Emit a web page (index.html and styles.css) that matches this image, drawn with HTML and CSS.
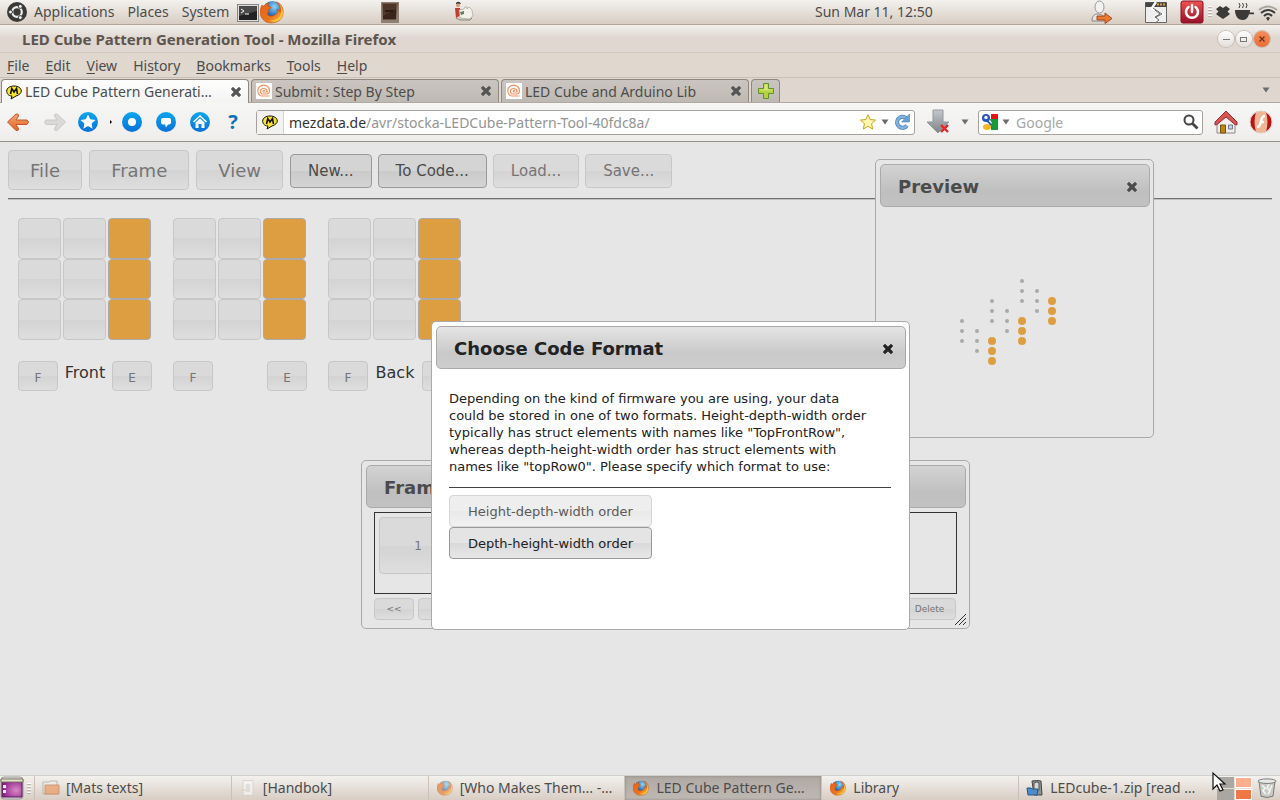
FILE: index.html
```html
<!DOCTYPE html>
<html lang="en">
<head>
<meta charset="utf-8">
<title>LED Cube Pattern Generation Tool - Mozilla Firefox</title>
<link rel="stylesheet" href="styles.css">
</head>
<body>
<svg class="defs" aria-hidden="true">
  <defs>
    <linearGradient id="blue" x1="0" y1="0" x2="0" y2="1"><stop offset="0" stop-color="#0aa6f0"/><stop offset="1" stop-color="#0a72d8"/></linearGradient>
    <linearGradient id="orange" x1="0" y1="0" x2="0" y2="1"><stop offset="0" stop-color="#f5a878"/><stop offset="1" stop-color="#e2601c"/></linearGradient>
    <linearGradient id="grey" x1="0" y1="0" x2="0" y2="1"><stop offset="0" stop-color="#c4c8cc"/><stop offset="1" stop-color="#7d8388"/></linearGradient>
    <linearGradient id="red" x1="0" y1="0" x2="0" y2="1"><stop offset="0" stop-color="#ee5350"/><stop offset="1" stop-color="#96102a"/></linearGradient>
    <radialGradient id="sphere" cx=".6" cy=".3" r=".7"><stop offset="0" stop-color="#8fd4f5"/><stop offset=".6" stop-color="#2f79c2"/><stop offset="1" stop-color="#173d80"/></radialGradient>
    <linearGradient id="flame" x1="0" y1="0" x2="1" y2="1"><stop offset="0" stop-color="#e8611a"/><stop offset=".6" stop-color="#e8761c"/><stop offset="1" stop-color="#ffcf3d"/></linearGradient>
    <radialGradient id="purple" cx=".7" cy=".6" r=".7"><stop offset="0" stop-color="#d98ac6"/><stop offset="1" stop-color="#8c1d8c"/></radialGradient>
    <symbol id="firefox" viewBox="0 0 24 24">
      <circle cx="12.500" cy="10.500" r="9.500" fill="url(#sphere)"/>
      <path d="M2 5c1 1 1 1 2 1 1-2 3-3 5-3-1 1-1 2-1 3l3 1c0 2-2 2-3 3 0 1 1 1 1 2-2 0-2 2-1 3 2 2 6 1 8-1 1-1 2-2 1-5 2 1 3 2 3 3 1-4-1-8-4-10 5 1 8 6 7 12-1 6-6 9-12 9C5 23 0 18 0 12c0-3 1-5 2-7z" fill="url(#flame)" stroke="#b8430d" stroke-width=".5"/>
      <path d="M19 4c3 4 3 8 1 12-2 3-6 5-10 4 5 4 12 0 13-6 0-4-1-8-4-10z" fill="#ffcc3a" opacity=".8"/>
    </symbol>
    <symbol id="bubble-m" viewBox="0 0 16 16">
      <path d="M8 2c4 0 7.300 2 7.300 5 0 2-2 4-5.300 5l-5 3 1-3C2 12 .7 9 .7 7c0-3 3.300-5 7.300-5z" fill="#fbe52c" stroke="#111" stroke-width="1"/>
      <path d="M4.500 10l1.300-5.500L8 8l2.500-3.500L11.500 10" fill="none" stroke="#111" stroke-width="1.600"/>
    </symbol>
    <symbol id="spiral" viewBox="0 0 16 16">
      <rect width="16" height="16" fill="#fff"/>
      <path d="M13.500 13H5.500C1 12 .5 5.500 4.500 3c4-2.500 9 .5 9 4.500 0 2-1 3.500-3 3.500H6C3.500 9.500 4 5.500 7.500 5.500c2.500 0 3.800 1.500 3.500 3.500H7.500c-.8-1 .2-2 1.500-1.500" fill="none" stroke="#f5915f" stroke-width="1.200"/>
    </symbol>
    <symbol id="cross" viewBox="0 0 12 12"><path d="M1.500 2.500l1-1h1L6 4l2.500-2.500h1l1 1v1L8 6l2.500 2.500v1l-1 1h-1L6 8l-2.500 2.500h-1l-1-1v-1L4 6 1.500 3.500z" fill="currentColor" stroke="currentColor" stroke-width=".6"/></symbol>
    <symbol id="caret" viewBox="0 0 8 6"><path d="M.5.500h7L4 5.500z" fill="currentColor"/></symbol>
    <symbol id="led-plane" viewBox="0 0 48 58" overflow="visible">
      <g fill="#aaa"><circle cx="7" cy="7" r="2"/><circle cx="7" cy="17" r="2"/><circle cx="7" cy="27" r="2"/><circle cx="22" cy="17" r="2"/><circle cx="22" cy="27" r="2"/><circle cx="22" cy="37" r="2"/></g>
      <g fill="#dd9e41"><circle cx="37" cy="27" r="4"/><circle cx="37" cy="37" r="4"/><circle cx="37" cy="47" r="4"/></g>
    </symbol>
  </defs>
</svg>
<div class="desktop">
  <header class="panel">
    <nav class="panel-menu">
      <svg class="i20" viewBox="0 0 20 20"><circle cx="10" cy="10" r="10" fill="#3a3936"/><circle cx="10" cy="10" r="4.800" fill="none" stroke="#eee" stroke-width="2.200"/><g fill="#eee" stroke="#3a3936"><circle cx="3.500" cy="10" r="2"/><circle cx="13.300" cy="4.400" r="2"/><circle cx="13.300" cy="15.600" r="2"/></g></svg>
      <button>Applications</button><button>Places</button><button>System</button>
    </nav>
    <div class="launchers">
      <svg class="i22" viewBox="0 0 22 22"><rect x=".5" y="3.500" width="21" height="17" fill="#ddd" stroke="#888"/><rect x="2" y="5" width="18" height="14" fill="#222"/><path d="M2 5h18v5L2 15z" fill="#4a4a4a"/><path d="M4 8l3 2-3 2M8 13h4" stroke="#fff" fill="none"/></svg>
      <svg class="i24"><use href="#firefox"/></svg>
    </div>
    <svg class="i20 drawer" viewBox="0 0 20 20"><path d="M1 0h18v21H1z" fill="#8f8074"/><path d="M2 1h16l-2 17H3z" fill="#6d5343"/><path d="M3 2h13v15H3z" fill="#3a241b"/><path d="M3 2h13v5L3 14z" fill="#4e352a"/><path d="M5 9h8" stroke="#2a1811" stroke-width="2"/></svg>
    <svg class="i20 worker" viewBox="0 0 20 20"><circle cx="4" cy="3" r="2.200" fill="#d9a178"/><path d="M2 2c0-3 4-3 5 0l-3-.5z" fill="#333"/><path d="M1 6h5l1 7-5 3z" fill="#c43b30"/><path d="M5 8l5-1 1-2h2v2l2-2 3 3 1 6-4 3-9-1z" fill="#f4f1ea" stroke="#998" stroke-width=".6"/><path d="M6 10l4-1v3l-3 1z" fill="#5c835a"/><path d="M2 16l4 2h10l2-2" fill="none" stroke="#887"/></svg>
    <span class="clock">Sun Mar 11, 12:50</span>
    <div class="tray">
      <svg class="i24 user" viewBox="0 0 24 24"><path d="M2 21c0-5 2-7 6-7s6 2 6 7z" fill="#e4e4e2" stroke="#888"/><ellipse cx="9.500" cy="7" rx="4.500" ry="6" fill="#f2f2f0" stroke="#999"/><path d="M7 16h8v-3l7 5.500-7 5V20H7z" fill="#e87930" stroke="#a8481a"/></svg>
      <svg class="i24 shot" viewBox="0 0 24 24"><path d="M1.500 2.500h21v20h-21z" fill="#eee" stroke="#666"/><path d="M1.500 2.500h21V7h-21z" fill="#444"/><path d="M13 4.500h2m1 0h2m1 0h2" stroke="#d9a33a" stroke-width="2"/><path d="M12 2L8 8l10 6-6 2 1 6" stroke="#fff" stroke-width="2.500" fill="none"/><path d="M9 8l9 6-6 3 1 1m-2-8l5 4-5 3 4 3-4 3" stroke="#666" fill="none"/></svg>
      <svg class="i24 power" viewBox="0 0 24 24"><rect x="1" y="1" width="22" height="22" rx="2" fill="url(#red)" stroke="#8b1020"/><path d="M8.500 7a6 6 0 1 0 7 0M12 5v7" fill="none" stroke="#fff" stroke-width="2.500" stroke-linecap="round"/></svg>
      <i class="grip"></i>
      <svg class="i14 dropbox" viewBox="0 0 14 14"><path d="M4 1l3 2 3-2 4 3-2.500 2.500L14 9l-2.500 2L7 14l-4.500-3L0 9l2.500-2.500L0 4z" fill="#3b3a37"/></svg>
      <svg class="i20" viewBox="0 0 20 20"><path d="M1 8h15c0 1 0 2-.3 2.500H20v1.700h-5C14 16 12 18 8.500 18 4 18 1 14 1 8z" fill="#3b3a37"/><path d="M5 1q2 2 0 5M8.500 1q2 2 0 5M12 1q2 2 0 5" fill="none" stroke="#3b3a37"/></svg>
      <svg class="i20 wifi" viewBox="0 0 20 20"><g fill="none" stroke-width="2"><path d="M1 8q9-7 18 0" stroke="#aaa6a0"/><path d="M3 11q7-6 14 0M6 14q4-4 8 0" stroke="#3b3a37"/></g><path d="M8 16q2-2 4 0l-2 3z" fill="#3b3a37"/></svg>
    </div>
  </header>
  <div class="titlebar"><h1>LED Cube Pattern Generation Tool - Mozilla Firefox</h1>
    <div class="win-buttons">
      <button aria-label="Minimize"><svg viewBox="0 0 16 16"><path d="M5 8.500h7" stroke="#777"/></svg></button>
      <button aria-label="Maximize"><svg viewBox="0 0 16 16"><rect x="4.500" y="6.500" width="6" height="4" fill="none" stroke="#777"/></svg></button>
      <button class="win-close" aria-label="Close"><svg viewBox="0 0 16 16"><path d="M5.500 5.500l5 5m0-5l-5 5" stroke="#6b3018" stroke-width="1.200"/></svg></button>
    </div>
  </div>
  <nav class="menubar"><button><u>F</u>ile</button><button><u>E</u>dit</button><button><u>V</u>iew</button><button>Hi<u>s</u>tory</button><button><u>B</u>ookmarks</button><button><u>T</u>ools</button><button><u>H</u>elp</button></nav>
  <div class="tabs">
    <div class="tab active"><svg class="i16"><use href="#bubble-m"/></svg><span>LED Cube Pattern Generati…</span><button aria-label="Close tab"><svg><use href="#cross"/></svg></button></div>
    <div class="tab"><svg class="i16"><use href="#spiral"/></svg><span>Submit : Step By Step</span><button aria-label="Close tab"><svg><use href="#cross"/></svg></button></div>
    <div class="tab"><svg class="i16"><use href="#spiral"/></svg><span>LED Cube and Arduino Lib</span><button aria-label="Close tab"><svg><use href="#cross"/></svg></button></div>
    <button class="new-tab" aria-label="New tab"><svg class="i16" viewBox="0 0 16 16"><path d="M5.500.500h5v5h5v5h-5v5h-5v-5h-5v-5h5z" fill="#b5d340" stroke="#62902e"/><path d="M6.500 1.500h3v5h5v1h-13v-1h5z" fill="#d8e87c"/></svg></button>
    <button class="tab-list" aria-label="List all tabs"><svg class="caret"><use href="#caret"/></svg></button>
  </div>
  <div class="navbar">
    <div class="nav-icons">
      <button aria-label="Back"><svg class="i24" viewBox="0 0 24 24"><path d="M1.500 12L10 4q3-.5 2.500 2L10 10h11q3 2 0 4.500H10l2.500 4q.5 2.500-2.500 2z" fill="url(#orange)" stroke="#c4562a"/></svg></button>
      <button aria-label="Forward"><svg class="i24" viewBox="0 0 24 24"><path d="M22.500 12L14 4q-3-.5-2.500 2l2.500 4H3q-3 2 0 4.500h11l-2.500 4q-.5 2.500 2.500 2z" fill="#dad9d7" stroke="#c9c8c6"/></svg></button>
      <button aria-label="Bookmarks"><svg class="i20" viewBox="0 0 20 20"><circle cx="10" cy="10" r="10" fill="url(#blue)"/><path d="M10 2.500l2.200 4.800 5.300.6-3.900 3.600 1 5.200L10 14.100l-4.600 2.600 1-5.200-3.900-3.600 5.300-.6z" fill="#fff"/></svg></button>
      <svg class="dot" viewBox="0 0 4 6"><path d="M1 1l2 2-2 2z"/></svg>
      <button aria-label="Record"><svg class="i20" viewBox="0 0 20 20"><circle cx="10" cy="10" r="10" fill="url(#blue)"/><circle cx="10" cy="10" r="4" fill="#fff"/></svg></button>
      <button aria-label="Comments"><svg class="i20" viewBox="0 0 20 20"><circle cx="10" cy="10" r="10" fill="url(#blue)"/><path d="M7 6h6q2 0 2 2v2.500q0 2-2 2h-1L10 15.500l-1-3H7q-2 0-2-2V8q0-2 2-2z" fill="#fff"/></svg></button>
      <button aria-label="Site home"><svg class="i20" viewBox="0 0 20 20"><circle cx="10" cy="10" r="10" fill="url(#blue)"/><path d="M3.500 10L10 4l6.500 6" fill="none" stroke="#fff" stroke-width="1.600"/><path d="M5.500 10.500L10 6.500l4.500 4V16h-3v-4h-3v4h-3z" fill="#fff"/></svg></button>
      <button class="help" aria-label="Help">?</button>
    </div>
    <div class="urlbar">
      <div class="identity"><svg class="i16"><use href="#bubble-m"/></svg></div>
      <div class="url" role="textbox" aria-label="Address"><span>mezdata.de</span>/avr/stocka-LEDCube-Pattern-Tool-40fdc8a/</div>
      <button aria-label="Bookmark this page"><svg class="i16" viewBox="0 0 16 16"><path d="M8 .7l2.200 4.800 5.300.6-3.900 3.600 1 5.300L8 12.300 3.400 15l1-5.300L.5 6.100l5.300-.6z" fill="#fff6b0" stroke="#c9a216"/></svg></button>
      <svg class="caret"><use href="#caret"/></svg>
      <button aria-label="Reload"><svg class="i16" viewBox="0 0 16 16"><path d="M13 11.500A5.500 5.500 0 1 1 12 4" fill="none" stroke="#4a7fb8" stroke-width="4"/><path d="M13 11.500A5.500 5.500 0 1 1 12 4" fill="none" stroke="#82b3e0" stroke-width="2.400"/><path d="M15.500 0v8h-8z" fill="#6d9fd2" stroke="#4a7fb8" stroke-width=".6"/></svg></button>
    </div>
    <div class="download"><svg class="i24" viewBox="0 0 24 24"><path d="M7 0h10v12h6L12 23 1 12h6z" fill="url(#grey)" stroke="#92979b"/><path d="M15 15l7 7m0-7l-7 7" stroke="#ed2224" stroke-width="2.400"/></svg><svg class="caret"><use href="#caret"/></svg></div>
    <div class="search">
      <svg class="i16" viewBox="0 0 16 16"><rect width="16" height="16" fill="#fff"/><path d="M9 0h7v5H9z" fill="#e11"/><path d="M8 5h8v11H9z" fill="#139b3c"/><path d="M5 1h4L8 6l2 3-2 2H5L1 7z" fill="#fff"/><circle cx="4" cy="4" r="4" fill="#2853c5"/><circle cx="4" cy="3.500" r="1.700" fill="#fff"/><ellipse cx="5" cy="13" rx="4" ry="3" fill="#f4b61b"/><path d="M5 7q3 2 4 4" stroke="#2853c5" stroke-width="2"/></svg>
      <svg class="caret"><use href="#caret"/></svg>
      <input type="text" placeholder="Google" aria-label="Search">
      <svg class="i16" viewBox="0 0 16 16"><circle cx="6" cy="6" r="4.500" fill="none" stroke="#454545" stroke-width="2"/><path d="M9.500 9.500l5 5" stroke="#454545" stroke-width="2.800"/></svg>
    </div>
    <button class="home" aria-label="Home"><svg class="i24" viewBox="0 0 24 24"><path d="M3 12l9-7 9 7v11H3z" fill="#f1efec" stroke="#888"/><path d="M1 12L12 1l11 11v3l-2-.5L12 7l-9 7.500L1 15z" fill="#d95452" stroke="#9c2c2f"/><path d="M6.500 15h5v8h-5z" fill="#bd8416" stroke="#7c530c"/><path d="M14.500 15h4v4h-4z" fill="#b8d3ee" stroke="#778"/></svg></button>
    <button class="flash" aria-label="Flash"><svg class="i24" viewBox="0 0 24 24"><circle cx="12" cy="12" r="11" fill="#b81212"/><path d="M7 2q5-2 10 0 3 10 0 20-5 2-10 0-3-10 0-20z" fill="#f0b594"/><path d="M16 6q-3 0-4 5-1 6-4 6M11 12h4" fill="none" stroke="#fff" stroke-width="2.400"/><circle cx="12" cy="12" r="11" fill="none" stroke="#dfd2cc"/></svg></button>
  </div>
  <main class="page">
    <div class="toolbar">
      <button class="btn big">File</button><button class="btn big">Frame</button><button class="btn big">View</button>
      <div class="actions"><button class="btn on">New...</button><button class="btn on">To Code...</button><button class="btn">Load...</button><button class="btn">Save...</button></div>
    </div>
    <div class="planes">
      <section class="plane">
        <div class="cells"><button class="btn"></button><button class="btn"></button><button class="btn lit"></button><button class="btn"></button><button class="btn"></button><button class="btn lit"></button><button class="btn"></button><button class="btn"></button><button class="btn lit"></button></div>
        <div class="plane-foot"><button class="btn">F</button><span>Front</span><button class="btn">E</button></div>
      </section>
      <section class="plane">
        <div class="cells"><button class="btn"></button><button class="btn"></button><button class="btn lit"></button><button class="btn"></button><button class="btn"></button><button class="btn lit"></button><button class="btn"></button><button class="btn"></button><button class="btn lit"></button></div>
        <div class="plane-foot"><button class="btn">F</button><button class="btn">E</button></div>
      </section>
      <section class="plane">
        <div class="cells"><button class="btn"></button><button class="btn"></button><button class="btn lit"></button><button class="btn"></button><button class="btn"></button><button class="btn lit"></button><button class="btn"></button><button class="btn"></button><button class="btn lit"></button></div>
        <div class="plane-foot"><button class="btn">F</button><span>Back</span><button class="btn"></button></div>
      </section>
    </div>
    <section class="dialog preview">
      <header><h2>Preview</h2><button aria-label="Close"><svg><use href="#cross"/></svg></button></header>
      <svg class="cube" viewBox="0 0 108 98" role="img" aria-label="Cube preview"><use href="#led-plane" x="0" y="40" width="48" height="58"/><use href="#led-plane" x="30" y="20" width="48" height="58"/><use href="#led-plane" x="60" y="0" width="48" height="58"/></svg>
    </section>
    <section class="dialog frames">
      <header><h2>Frames</h2></header>
      <div class="strip"><button class="btn">1</button></div>
      <div class="frame-foot"><button class="btn">&lt;&lt;</button><button class="btn" aria-label="Next"></button><button class="btn delete">Delete</button></div>
      <svg class="resize" viewBox="0 0 12 12"><path d="M0 11L11 0M4 11l7-7M8 11l3-3" stroke="#333" fill="none"/></svg>
    </section>
    <section class="dialog modal" role="dialog" aria-labelledby="fmt">
      <header><h2 id="fmt">Choose Code Format</h2><button aria-label="Close"><svg><use href="#cross"/></svg></button></header>
      <div class="modal-body">
        <p>Depending on the kind of firmware you are using, your data could be stored in one of two formats. Height-depth-width order typically has struct elements with names like "TopFrontRow", whereas depth-height-width order has struct elements with names like "topRow0". Please specify which format to use:</p>
        <hr>
        <button class="btn pale">Height-depth-width order</button>
        <button class="btn strong">Depth-height-width order</button>
      </div>
    </section>
  </main>
  <footer class="taskbar">
    <button class="show-desktop" aria-label="Show desktop"><svg class="i24" viewBox="0 0 24 24"><rect x="1" y="1" width="22" height="22" rx="3" fill="#ddd" stroke="#999"/><path d="M2 4h20v17H2z" fill="url(#purple)" stroke="#5b1a5b"/><path d="M1 3h22v3H1z" fill="#e6e3d4" stroke="#777355"/><path d="M3 9h3v3H3zm0 5h3v3H3z" fill="#eee"/></svg></button>
    <i class="grip"></i>
    <div class="tasks">
      <button><svg class="i16 faded" viewBox="0 0 16 16"><path d="M0 2h6l1-1h7v13H0z" fill="#eee" stroke="#999"/><path d="M2 5h14v9H2z" fill="#ec8f52" stroke="#bd6a37"/></svg><span>[Mats texts]</span></button>
      <button><svg class="i16 faded" viewBox="0 0 16 16"><path d="M3 .5h10v15H3z" fill="#fafafa" stroke="#ccc"/><path d="M6 4h4v8H6z" fill="#ddd"/><path d="M1 10h5" stroke="#dcca9a"/></svg><span>[Handbok]</span></button>
      <button><svg class="i16 faded"><use href="#firefox"/></svg><span>[Who Makes Them... -…</span></button>
      <button class="current"><svg class="i16"><use href="#firefox"/></svg><span>LED Cube Pattern Ge…</span></button>
      <button><svg class="i16"><use href="#firefox"/></svg><span>Library</span></button>
      <button><svg class="i16" viewBox="0 0 16 16"><path d="M5 1q5-1 9 0l1 14H7z" fill="#8d9390" stroke="#444"/><path d="M7 3q3-2 5 0v7H7z" fill="#d5d8d6" stroke="#555"/><path d="M0 8h4l1 1h6l-1 6H1z" fill="#4f8ccb" stroke="#24568c"/></svg><span>LEDcube-1.zip [read …</span></button>
    </div>
    <div class="workspaces"><i></i><i class="w1"></i><i></i><i class="w2"></i></div>
    <svg class="i20 trash" viewBox="0 0 20 22" preserveAspectRatio="none"><path d="M2 4h16l-2 16q-6 3-12 0z" fill="#c9c9c5" stroke="#777"/><path d="M5 8l3 3-2 3 3 4m3-11l-2 4 3 3-2 4m4-10l-2 5" stroke="#f5f5f3" stroke-width="1.600" fill="none"/><ellipse cx="10" cy="3.500" rx="9" ry="2.500" fill="#e8e8e6" stroke="#777"/></svg>
  </footer>
  <svg class="cursor" viewBox="0 0 14 20"><path d="M1 1v16l4-4 3 6 3-1-3-6h5z" fill="#fff" stroke="#111" stroke-width="1.200"/></svg>
</div>
</body>
</html>
```
FILE: styles.css
```css
* { box-sizing: border-box; }
body { margin: 0; font-family: "Noto Sans", sans-serif; font-size: 14px; color: #4c4c4c; }
button { font: inherit; color: inherit; background: none; border: 0; padding: 0; margin: 0; }
svg { display: block; flex: none; overflow: visible; }
.defs { position: absolute; width: 0; height: 0; }
.i14 { width: 14px; height: 14px; }
.i16 { width: 16px; height: 16px; }
.i20 { width: 20px; height: 20px; }
.i22 { width: 22px; height: 22px; }
.i24 { width: 24px; height: 24px; }
.caret { width: 8px; height: 6px; color: #6c6c6c; }
.faded { opacity: .6; }
.desktop { position: relative; display: flex; flex-direction: column; height: 100vh; overflow: hidden; background: #e6e6e6; }

.panel { display: flex; align-items: center; height: 25px; padding: 0 2px 1px 7px; background: linear-gradient(#f3f1ee, #d8cdc3); border-bottom: 1px solid #b3a79d; white-space: nowrap; }
.panel-menu { display: flex; align-items: center; width: 230px; }
.panel-menu button { margin-left: 7px; }
.panel-menu button + button { margin-left: 13px; }
.launchers { display: flex; align-items: center; gap: 1px; }
.drawer { margin-left: 96px; }
.worker { margin-left: 54px; }
.clock { margin-left: 341px; }
.tray { display: flex; align-items: center; margin-left: auto; }
.shot { margin-left: 30px; }
.power { margin-left: 12px; }
.grip { width: 4px; height: 11px; margin: 0 4px; background: repeating-linear-gradient(#fff 0 1px, #bbb5ae 1px 2px, transparent 2px 3px); }
.dropbox { margin-right: 4px; }
.wifi { margin-left: 4px; }

.titlebar { display: flex; align-items: center; justify-content: space-between; height: 28px; padding: 0 10px 0 22px; background: linear-gradient(#f3f0ed, #dfd7d0 50%); border-bottom: 1px solid #d3c8be; }
.titlebar h1 { margin: 0; font-size: 15px; line-height: 20px; font-weight: 700; color: #5d554e; }
.win-buttons { display: flex; gap: 2px; }
.win-buttons button { width: 16px; height: 16px; border-radius: 50%; background: linear-gradient(#fff, #e2ddd8); box-shadow: 0 0 0 1px #c5bcb4; }
.win-buttons .win-close { background: linear-gradient(#f58d5c, #ea6c34); }

.menubar { display: flex; align-items: center; gap: 16px; height: 25px; padding-left: 7px; background: #e0d7cf; border-bottom: 1px solid #cbc0b7; }
.menubar u { text-underline-offset: 2px; }

.tabs { display: flex; align-items: flex-end; gap: 2px; height: 25px; padding: 0 10px 0 1px; background: #ded6cf; border-bottom: 1px solid #b1a8a1; }
.tab { display: flex; align-items: center; gap: 3px; width: 248px; height: 23px; padding: 0 6px 0 4px; border: 1px solid #8e8881; border-bottom: 0; border-radius: 4px 4px 0 0; background: linear-gradient(#cac5c0, #bfb9b3); }
.tab span { flex: 1; white-space: nowrap; }
.tab svg { flex: none; }
.tab button svg { width: 12px; height: 12px; color: #555; }
.tab.active { height: 24px; margin-bottom: -1px; background: linear-gradient(#fdfdfd, #f3f3f2); }
.new-tab { display: flex; justify-content: center; align-items: center; width: 29px; height: 23px; border: 1px solid #8e8881; border-bottom: 0; border-radius: 4px 4px 0 0; background: linear-gradient(#cac5c0, #bfb9b3); }
.tab-list { margin-left: auto; align-self: center; }

.navbar { display: flex; align-items: center; height: 39px; padding: 0 7px 0 6px; background: linear-gradient(#f6f6f5, #efeeed); border-bottom: 1px solid #969288; }
.nav-icons { display: flex; align-items: center; width: 250px; gap: 14px; }
.nav-icons button:nth-of-type(2) { margin-right: -3px; margin-left: -1px; }
.dot { width: 4px; height: 6px; margin: 0 -5px 0 -3px; }
.help { width: 18px; font-size: 20px; font-weight: 700; line-height: 24px; color: #1272b6; }
.urlbar, .search { display: flex; align-items: center; height: 25px; border: 1px solid #a5a29d; border-radius: 3px; background: #fff; }
.urlbar { flex: 1; gap: 5px; padding-right: 4px; }
.identity { display: flex; align-items: center; justify-content: center; width: 27px; height: 23px; background: #f2f2f1; border-right: 1px solid #d5d5d5; }
.url { flex: 1; color: #949494; white-space: nowrap; }
.url span { color: #333; }
.download { display: flex; align-items: center; justify-content: space-between; width: 63px; padding: 0 9px 0 11px; }
.search { width: 225px; gap: 4px; padding: 0 3px; }
.search input { flex: 1; min-width: 0; padding: 0 0 0 2px; border: 0; outline: 0; background: none; font: inherit; }
.search input::placeholder { color: #a7a7a7; opacity: 1; }
.home { margin-left: 11px; }
.flash { margin-left: 11px; }

.page { position: relative; flex: 1; min-height: 0; padding: 8px 8px 0; font-family: "DejaVu Sans", Verdana, sans-serif; color: #333; }
.btn { border: 1px solid #c7c7c7; border-radius: 4px; background: linear-gradient(#dadada 50%, #d3d3d3 50%, #dedede); color: #757575; }
.btn.on { border-color: #999; background: linear-gradient(#d4d4d4 50%, #cacaca 50%, #d4d4d4); color: #4b4b4b; }
.btn.lit { border-color: #aaa; background: #dd9e41; }
.toolbar { display: flex; align-items: center; gap: 7px; height: 49px; padding-bottom: 8px; border-bottom: 1px solid #717171; box-shadow: 0 1px #c0c0c0; }
.toolbar .big { height: 40px; padding: 0 21px; font-size: 18px; }
.actions { display: flex; gap: 6px; padding-top: 2px; }
.actions .btn { height: 34px; padding: 0 17px; font-size: 15px; }
.planes { display: flex; gap: 21px; padding: 19px 10px; }
.plane { width: 134px; }
.cells { display: grid; grid-template-columns: 43px 43px 43px; grid-template-rows: 41px 40px 41px; column-gap: 2px; }
.plane-foot { display: flex; justify-content: space-between; margin-top: 21px; font-size: 16px; }
.plane-foot .btn { width: 40px; height: 30px; padding-top: 3px; font-size: 12px; }
.plane-foot span { line-height: 24px; }

.dialog { position: absolute; padding: 4px 3px 4px 4px; border: 1px solid #aaa; border-radius: 5px; background: #e6e6e6; }
.dialog header { display: flex; align-items: center; justify-content: space-between; height: 43px; padding: 2px 11px 0 17px; border: 1px solid #aaa; border-radius: 5px; background: linear-gradient(#d3d3d3, #bfbfbf 65%, #c2c2c2); color: #4b4b4b; }
.dialog h2 { margin: 0; font-size: 18px; }
.dialog header svg { width: 12px; height: 12px; }
.preview { left: 875px; top: 17px; width: 279px; height: 279px; }
.cube { width: 108px; height: 98px; margin: 67px 0 0 75px; }
.frames { left: 361px; top: 318px; width: 609px; height: 169px; }
.strip { height: 82px; margin: 4px 9px 4px 8px; padding: 4px; border: 1px solid #333; }
.strip .btn { width: 78px; height: 57px; font-size: 12px; }
.frame-foot { display: flex; gap: 4px; margin: 0 10px 0 8px; }
.frame-foot .btn { width: 40px; height: 22px; font-size: 9px; }
.frame-foot .delete { width: 53px; margin-left: auto; }
.resize { position: absolute; right: 2px; bottom: 2px; width: 12px; height: 12px; }
.modal { left: 431px; top: 179px; width: 479px; height: 309px; background: #fff; }
.modal header { color: #222; background: linear-gradient(#e4e4e4, #c9c9c9 65%, #cdcdcd); }
.modal-body { display: flex; flex-direction: column; align-items: flex-start; padding: 21px 15px 0 13px; font-size: 13px; line-height: 17px; color: #222; }
.modal-body p { max-width: 424px; margin: 0; }
.modal-body hr { width: 100%; margin: 12px 0 7px; border: 0; border-top: 1px solid #444; }
.modal-body .btn { width: 203px; height: 32px; }
.btn.pale { border-color: #d6d6d6; background: linear-gradient(#eee 50%, #e9e9e9 50%, #f1f1f1); color: #5a5a5a; }
.btn.strong { border-color: #999; background: linear-gradient(#e4e4e4 50%, #d9d9d9 50%, #e8e8e8); color: #222; }

.taskbar { display: flex; align-items: center; height: 25px; background: linear-gradient(#f3f1ee, #d8cdc3); border-top: 1px solid #d3d0cc; white-space: nowrap; }
.taskbar .grip { margin: 0 3px; }
.tasks { display: flex; flex: 1; height: 24px; margin-right: 2px; }
.tasks button { display: flex; flex: 1; align-items: center; gap: 7px; min-width: 0; padding: 0 0 1px 8px; border-left: 1px solid #cbc1b8; text-align: left; }
.tasks span { overflow: hidden; }
.tasks .current { background: linear-gradient(#afa8a3, #bfb9b4); box-shadow: inset 0 0 3px #8c847d; }
.workspaces { display: grid; grid-template-columns: 17px 17px; grid-template-rows: 11px 11px; gap: 1px; }
.workspaces i { background: #aaa6a2; }
.workspaces .w1 { border: 1px solid #fff; background: #ffae8d; }
.workspaces .w2 { border: 1px solid #fff; background: #f07746; }
.trash { margin: 0 3px 0 5px; }
.cursor { position: absolute; right: 54px; bottom: 8px; width: 14px; height: 20px; }
```
